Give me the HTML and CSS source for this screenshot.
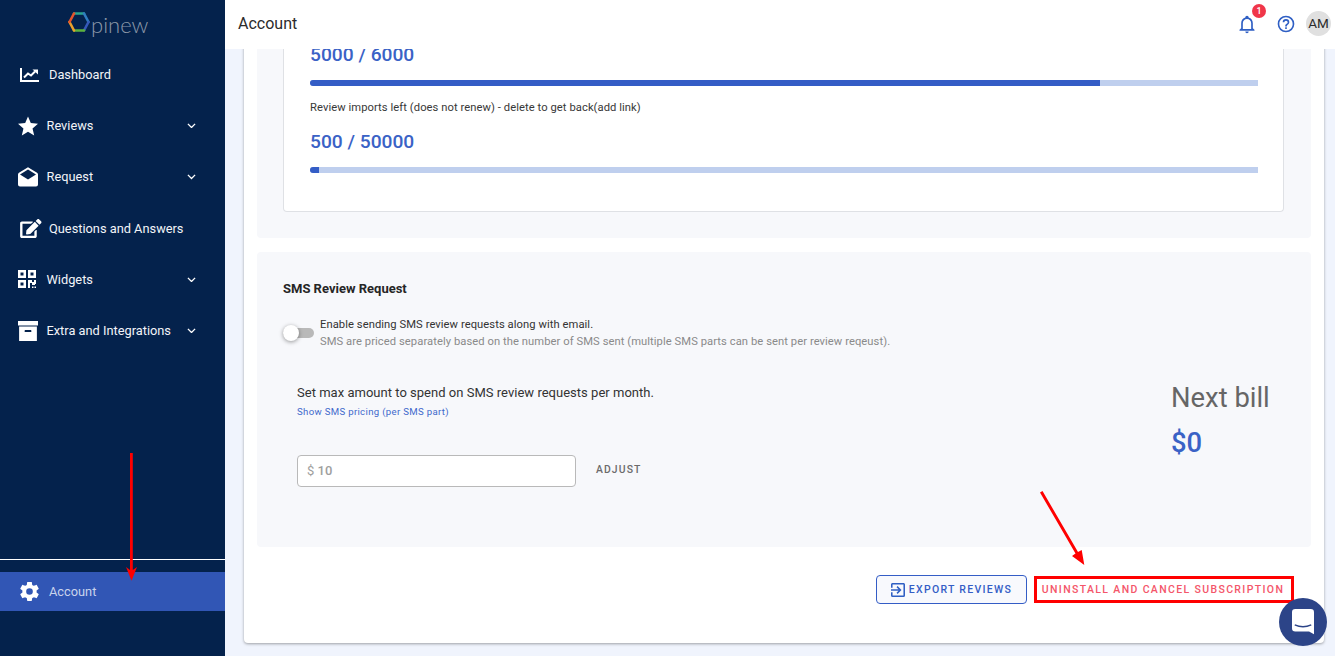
FILE: index.html
```html
<!DOCTYPE html>
<html lang="en">
<head>
<meta charset="utf-8">
<title>Account</title>
<link rel="stylesheet" href="styles.css">
</head>
<body>
<div class="app">
  <aside class="sidebar">
    <div class="logo">
      <svg class="logo-mark" viewBox="0 0 22 20" fill="none" stroke-width="2.6" stroke-linejoin="round" stroke-linecap="round">
        <path d="M6 1.500H16" stroke="#2aa58f"/>
        <path d="M16 1.500L20.500 10" stroke="#2f7cc0"/>
        <path d="M20.500 10L16 18.500" stroke="#3558b8"/>
        <path d="M16 18.500H6" stroke="#5cb23c"/>
        <path d="M6 18.500L1.500 10" stroke="#e8a02c"/>
        <path d="M1.500 10L6 1.500" stroke="#e4532c"/>
      </svg>
      <span class="logo-text">pinew</span>
    </div>
    <nav class="nav">
      <a class="nav-item nav-item-wide">
        <svg class="nav-icon nav-icon-chart" viewBox="0 0 19 14" fill="none" stroke="#fff"><path d="M1 0V13H19" stroke-width="2"/><path d="M4 9.500L8 5.500L11 7.500L15 3.500" stroke-width="2"/><path d="M12.500 1.500H18V6.500Z" fill="#fff" stroke="none"/></svg>
        <span class="nav-label">Dashboard</span>
      </a>
      <a class="nav-item">
        <svg class="nav-icon" viewBox="2 2 20 19" fill="#fff"><path d="M12,17.27L18.18,21L16.54,13.97L22,9.24L14.81,8.62L12,2L9.19,8.62L2,9.24L7.45,13.97L5.82,21L12,17.27Z"/></svg>
        <span class="nav-label">Reviews</span>
        <svg class="chevron" viewBox="0 0 10 6" fill="none" stroke="#fff" stroke-width="1.500"><path d="M1 1L5 5L9 1"/></svg>
      </a>
      <a class="nav-item">
        <svg class="nav-icon" viewBox="2 0.500 20 20" fill="#fff"><path d="M4,8L12,13L20,8V8L12,3L4,8V8M22,8V18A2,2 0 0,1 20,20H4A2,2 0 0,1 2,18V8C2,7.27 2.39,6.64 2.97,6.29L12,0.64L21.03,6.29C21.61,6.64 22,7.27 22,8Z"/></svg>
        <span class="nav-label">Request</span>
        <svg class="chevron" viewBox="0 0 10 6" fill="none" stroke="#fff" stroke-width="1.500"><path d="M1 1L5 5L9 1"/></svg>
      </a>
      <a class="nav-item nav-item-wide">
        <svg class="nav-icon nav-icon-edit" viewBox="0 0 576 512" fill="#fff"><path d="M402.600 83.200l90.200 90.200c3.800 3.800 3.800 10 0 13.800L274.400 405.600l-92.800 10.300c-12.400 1.400-22.900-9.100-21.500-21.500l10.300-92.800L388.800 83.200c3.800-3.800 10-3.800 13.800 0zm162-22.900l-48.800-48.800c-15.200-15.200-39.900-15.200-55.200 0l-35.400 35.400c-3.800 3.800-3.800 10 0 13.800l90.200 90.200c3.800 3.800 10 3.800 13.800 0l35.400-35.400c15.200-15.300 15.200-40 0-55.200zM384 346.200V448H64V128h229.800c3.200 0 6.200-1.300 8.500-3.500l40-40c7.600-7.600 2.200-20.500-8.500-20.500H48C21.500 64 0 85.500 0 112v352c0 26.500 21.500 48 48 48h352c26.500 0 48-21.500 48-48V306.200c0-10.700-12.900-16-20.500-8.500l-40 40c-2.200 2.300-3.500 5.300-3.500 8.500z"/></svg>
        <span class="nav-label">Questions and Answers</span>
      </a>
      <a class="nav-item">
        <svg class="nav-icon nav-icon-qr" viewBox="3 3 18 18" fill="#fff" fill-rule="evenodd"><path d="M3 3h8v8H3zM5.500 5.500v3h3v-3zM13 3h8v8h-8zM15.500 5.500v3h3v-3zM3 13h8v8H3zM5.500 15.500v3h3v-3zM13 13h4v2h2v-2h2v4h-1v1h-3v-2h-2v5h-2zM17 19.500h1.500v1.500H17zM19.500 19.500H21V21h-1.500z"/></svg>
        <span class="nav-label">Widgets</span>
        <svg class="chevron" viewBox="0 0 10 6" fill="none" stroke="#fff" stroke-width="1.500"><path d="M1 1L5 5L9 1"/></svg>
      </a>
      <a class="nav-item">
        <svg class="nav-icon" viewBox="3 3 18 18" fill="#fff"><path d="M3,3H21V7H3V3M4,8H20V21H4V8M9.500,11A0.500,0.500 0 0,0 9,11.500V13H15V11.500A0.500,0.500 0 0,0 14.500,11H9.500Z"/></svg>
        <span class="nav-label">Extra and Integrations</span>
        <svg class="chevron" viewBox="0 0 10 6" fill="none" stroke="#fff" stroke-width="1.500"><path d="M1 1L5 5L9 1"/></svg>
      </a>
    </nav>
    <div class="sidebar-foot">
      <a class="account-link">
        <svg class="account-icon" viewBox="2 2 20 20" fill="#fff"><path d="M12,15.500A3.500,3.500 0 0,1 8.500,12A3.500,3.500 0 0,1 12,8.500A3.500,3.500 0 0,1 15.500,12A3.500,3.500 0 0,1 12,15.500M19.430,12.970C19.470,12.650 19.500,12.330 19.500,12C19.500,11.670 19.470,11.340 19.430,11L21.540,9.370C21.730,9.220 21.780,8.950 21.660,8.730L19.660,5.270C19.540,5.050 19.270,4.960 19.050,5.050L16.560,6.050C16.040,5.660 15.500,5.320 14.870,5.070L14.500,2.420C14.460,2.180 14.250,2 14,2H10C9.750,2 9.540,2.180 9.500,2.420L9.130,5.070C8.500,5.320 7.960,5.660 7.440,6.050L4.950,5.050C4.730,4.960 4.460,5.050 4.340,5.270L2.340,8.730C2.210,8.950 2.270,9.220 2.460,9.370L4.570,11C4.530,11.340 4.500,11.670 4.500,12C4.500,12.330 4.530,12.650 4.570,12.970L2.460,14.630C2.270,14.780 2.210,15.050 2.340,15.270L4.340,18.730C4.460,18.950 4.730,19.030 4.950,18.950L7.440,17.940C7.960,18.340 8.500,18.680 9.130,18.930L9.500,21.580C9.540,21.820 9.750,22 10,22H14C14.250,22 14.460,21.820 14.500,21.580L14.870,18.930C15.500,18.670 16.040,18.340 16.560,17.940L19.050,18.950C19.270,19.030 19.540,18.950 19.660,18.730L21.660,15.270C21.780,15.050 21.730,14.780 21.540,14.630L19.430,12.970Z"/></svg>
        <span class="account-label">Account</span>
      </a>
    </div>
  </aside>

  <div class="content">
    <header class="topbar">
      <h1 class="page-title">Account</h1>
      <div class="topbar-actions">
        <span class="bell">
          <svg class="topbar-icon" viewBox="0 0 24 24" fill="#2f5fc4"><path d="M10 21H14C14 22.100 13.100 23 12 23S10 22.100 10 21M21 19V20H3V19L5 17V11C5 7.900 7 5.200 10 4.300V4C10 2.900 10.900 2 12 2S14 2.900 14 4V4.300C17 5.200 19 7.900 19 11V17L21 19M17 11C17 8.200 14.800 6 12 6S7 8.200 7 11V18H17V11Z"/></svg>
          <span class="badge">1</span>
        </span>
        <svg class="topbar-icon" viewBox="0 0 24 24" fill="#2f5fc4"><path d="M11,18H13V16H11V18M12,2A10,10 0 0,0 2,12A10,10 0 0,0 12,22A10,10 0 0,0 22,12A10,10 0 0,0 12,2M12,20C7.590,20 4,16.410 4,12C4,7.590 7.590,4 12,4C16.410,4 20,7.590 20,12C20,16.410 16.410,20 12,20M12,6A4,4 0 0,0 8,10H10A2,2 0 0,1 12,8A2,2 0 0,1 14,10C14,12 11,11.750 11,15H13C13,12.750 16,12.500 16,10A4,4 0 0,0 12,6Z"/></svg>
        <span class="avatar">AM</span>
      </div>
    </header>

    <main class="main">
      <section class="card">
        <div class="panel panel-usage">
          <div class="usage-box">
            <div class="usage-value">5000 / 6000</div>
            <div class="bar"><div class="bar-fill" style="width:83.33%"></div></div>
            <div class="usage-note">Review imports left (does not renew) - delete to get back(add link)</div>
            <div class="usage-value">500 / 50000</div>
            <div class="bar"><div class="bar-fill" style="width:1%"></div></div>
          </div>
        </div>

        <div class="panel panel-sms">
          <h2 class="panel-title">SMS Review Request</h2>
          <div class="toggle-row">
            <span class="toggle"><span class="toggle-knob"></span></span>
            <div>
              <div class="toggle-label">Enable sending SMS review requests along with email.</div>
              <div class="toggle-hint">SMS are priced separately based on the number of SMS sent (multiple SMS parts can be sent per review reqeust).</div>
            </div>
          </div>
          <div class="sms-body">
            <div class="sms-left">
              <div class="sms-limit">Set max amount to spend on SMS review requests per month.</div>
              <a class="sms-link">Show SMS pricing (per SMS part)</a>
              <div class="sms-form">
                <div class="sms-input"><span class="sms-prefix">$</span> <span>10</span></div>
                <span class="btn-adjust">ADJUST</span>
              </div>
            </div>
            <div class="sms-bill">
              <div class="bill-label">Next bill</div>
              <div class="bill-value">$0</div>
            </div>
          </div>
        </div>

        <div class="actions">
          <a class="btn-export">
            <svg class="btn-icon" viewBox="3 3 18 18" fill="#2f5fc4"><path d="M19,3H5C3.890,3 3,3.890 3,5V9H5V5H19V19H5V15H3V19A2,2 0 0,0 5,21H19A2,2 0 0,0 21,19V5C21,3.890 20.100,3 19,3M10.080,15.580L11.500,17L16.500,12L11.500,7L10.080,8.410L12.670,11H3V13H12.670L10.080,15.580Z"/></svg>
            EXPORT REVIEWS
          </a>
          <a class="btn-uninstall">UNINSTALL AND CANCEL SUBSCRIPTION</a>
        </div>
      </section>
    </main>
  </div>
</div>

<svg class="annotations" viewBox="0 0 1335 656" fill="#f00" stroke="none">
  <path d="M130 453H132.800V570L137 567L131.500 580.700L126 567L130 570Z"/>
  <path d="M1040 492.500L1042.500 491L1078 552L1081.700 550L1084.300 565L1072 556L1075.500 553.500Z"/>
</svg>

<a class="chat-launcher">
  <svg viewBox="1 1 20 23" class="chat-icon"><path d="M4 1H18A3 3 0 0 1 21 4V24L16.500 21.500H4A3 3 0 0 1 1 18.500V4A3 3 0 0 1 4 1Z" fill="#fff"/><path d="M3.500 15.500C8 17.500 14 17.500 18.500 15.500" stroke="#2c4488" stroke-width="1.200" fill="none"/></svg>
</a>
</body>
</html>
```
FILE: styles.css
```css
* { box-sizing: border-box; }
html, body { margin: 0; height: 100%; overflow: hidden; }
body { font-family: Roboto, "Liberation Sans", sans-serif; color: #212121; background: #f0f4fd; }

.app { display: flex; height: 656px; }

/* Sidebar */
.sidebar { width: 225px; flex: none; background: #04224c; display: flex; flex-direction: column; color: #fff; }
.logo { height: 49px; display: flex; align-items: flex-start; padding: 12px 0 0 68px; gap: 1px; }
.logo-mark { width: 22px; height: 20px; flex: none; }
.logo-text { font-family: Lato, sans-serif; font-weight: 300; font-size: 22px; line-height: 25px; color: #8c99a9; }
.nav { display: flex; flex-direction: column; }
.nav-item { height: 51.200px; display: flex; align-items: center; padding: 0 29px 0 17.500px; }
.nav-item-wide { padding-left: 20px; }
.nav-icon { width: 20px; height: 20px; flex: none; }
.nav-icon-chart { width: 19px; height: 14px; margin-right: 1px; }
.nav-icon-edit { width: 21.600px; height: 19px; margin-right: -1.600px; }
.nav-icon-qr { width: 18px; height: 18px; margin-right: 2px; }
.nav-label { margin-left: 9px; font-size: 12.800px; color: #f2f4f8; flex: 1; }
.nav-item-wide .nav-label { margin-left: 9px; }
.chevron { width: 9px; height: 5.400px; flex: none; }
.sidebar-foot { margin-top: auto; border-top: 1px solid #fff; padding: 12px 0 45px; }
.account-link { height: 39px; background: #3156b5; display: flex; align-items: center; padding-left: 20px; }
.account-icon { width: 19px; height: 19px; flex: none; }
.account-label { margin-left: 10px; font-size: 12.800px; color: #c9d3ec; }

/* Top bar */
.content { flex: 1; min-width: 0; display: flex; flex-direction: column; }
.topbar { height: 49px; flex: none; background: #fff; display: flex; align-items: center; justify-content: space-between; padding: 0 4px 2px 13px; position: relative; z-index: 1; }
.page-title { margin: 0; font-size: 16px; font-weight: 400; color: #2b2b2b; }
.topbar-actions { display: flex; align-items: center; gap: 10.500px; }
.bell { position: relative; display: flex; margin-right: 8px; }
.topbar-icon { width: 20px; height: 20px; display: block; }
.badge { position: absolute; top: -10px; left: 15px; width: 14px; height: 14px; border-radius: 50%; background: #f0364a; color: #fff; font-size: 9px; font-weight: 500; line-height: 14px; text-align: center; }
.avatar { width: 25px; height: 25px; border-radius: 50%; background: #e0e0e0; font-size: 13.500px; line-height: 25px; text-align: center; color: #2b2b2b; }

/* Main */
.main { flex: 1; min-height: 0; overflow: hidden; display: flex; flex-direction: column; justify-content: flex-end; padding: 0 11px 13px 19px; }
.card { background: #fff; border-radius: 0 0 4px 4px; box-shadow: 0 1px 3px rgba(0, 0, 0, .35); padding: 0 13px 39px; flex: none; }
.panel { background: #f7f8fb; border-radius: 4px; }
.panel-usage { padding: 0 27px 26px 26px; margin-bottom: 14px; }
.usage-box { background: #fff; border: 1px solid #dfe1e5; border-top: 0; border-radius: 0 0 4px 4px; padding: 0 25px 38px 26px; }
.usage-value { font-size: 19.200px; font-weight: 500; line-height: 24px; color: #3a62c6; }
.bar { height: 6px; margin-top: 13px; background: #bfcfee; border-radius: 3px 0 0 3px; overflow: hidden; }
.bar-fill { height: 100%; background: #345dc6; }
.usage-note { font-size: 11.200px; letter-spacing: .07px; line-height: 14px; margin: 15px 0 15px; color: #383838; }

.panel-sms { padding: 29px 27px 0 26px; height: 295px; }
.panel-title { margin: 0; font-size: 13px; font-weight: 700; line-height: 16px; color: #262626; }
.toggle-row { display: flex; align-items: center; gap: 6px; margin-top: 19px; }
.toggle { width: 31px; height: 10px; border-radius: 5px; background: #b9b9b9; position: relative; flex: none; }
.toggle-knob { position: absolute; left: 0; top: -3px; width: 16px; height: 16px; border-radius: 50%; background: #fff; box-shadow: 0 1px 4px rgba(0, 0, 0, .4); }
.toggle-label { font-size: 11.200px; letter-spacing: .07px; line-height: 17px; color: #333; }
.toggle-hint { font-size: 11.200px; letter-spacing: .07px; line-height: 17px; color: #8a8a8a; }
.sms-body { display: flex; justify-content: space-between; padding: 0 14px; margin-top: 34px; }
.sms-limit { font-size: 13px; letter-spacing: .02px; line-height: 18px; color: #333; }
.sms-link { display: block; font-size: 9.600px; letter-spacing: .33px; line-height: 14px; margin-top: 3px; color: #4169cc; }
.sms-form { display: flex; align-items: center; gap: 20px; margin-top: 36px; }
.sms-input { width: 279px; height: 32px; background: #fff; border: 1px solid #b9b9b9; border-radius: 4px; padding-left: 9px; font-size: 13px; line-height: 30px; color: #9e9e9e; font-weight: 500; }
.sms-prefix { font-weight: 400; }
.btn-adjust { font-size: 10.400px; font-weight: 500; letter-spacing: 1.100px; color: #6b6b6b; margin-top: -4px; }
.sms-bill { width: 99px; margin-top: -3px; }
.bill-label { font-size: 27.400px; line-height: 34px; color: #666; white-space: nowrap; }
.bill-value { font-size: 27.400px; line-height: 34px; font-weight: 500; color: #3a62c6; margin-top: 11px; }

.actions { display: flex; justify-content: flex-end; align-items: flex-start; gap: 7px; margin-top: 28px; padding-right: 17px; }
.btn-export { width: 151px; height: 29px; border: 1px solid #345dc6; border-radius: 4px; display: flex; align-items: center; justify-content: center; gap: 4px; font-size: 10.500px; font-weight: 500; letter-spacing: 1.300px; color: #345dc6; background: #f8f9fd; }
.btn-icon { width: 14px; height: 14px; }
.btn-uninstall { width: 260px; height: 27px; margin-top: 1px; padding-right: 2px; border: 3px solid #f00; display: flex; align-items: center; justify-content: center; font-size: 10.500px; font-weight: 500; letter-spacing: 1.360px; color: #f4566a; white-space: nowrap; }

/* Overlays */
.annotations { position: absolute; left: 0; top: 0; width: 1335px; height: 656px; pointer-events: none; z-index: 5; }
.chat-launcher { position: absolute; left: 1279px; top: 598px; width: 48px; height: 48px; border-radius: 50%; background: #2c4488; display: flex; align-items: center; justify-content: center; z-index: 6; }
.chat-icon { width: 22px; height: 25.300px; }
```
